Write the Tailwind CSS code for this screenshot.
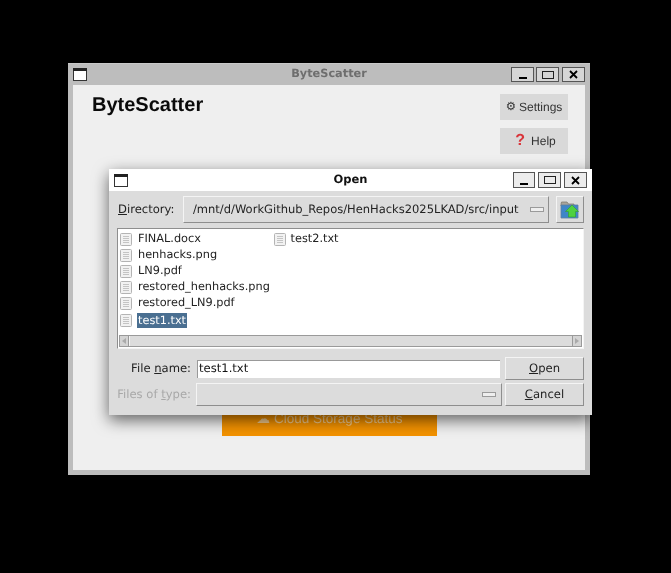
<!DOCTYPE html>
<html>
<head>
<meta charset="utf-8">
<script src="https://cdn.jsdelivr.net/npm/@tailwindcss/browser@4"></script>
</head>
<body class="bg-black">
<div class="relative w-[671px] h-[573px] overflow-hidden bg-black font-['DejaVu_Sans',sans-serif] text-[11.6px] text-[#222] blur-[0.35px] [text-rendering:geometricPrecision]">

  <!-- main window -->
  <div class="absolute left-[68px] top-[63px] w-[522px] h-[412px] bg-[#bdbdbd] flex flex-col border-t border-t-[#c8c8c8] px-[5px] pb-[5px]">
    <div class="h-[21px] -mx-[5px] shrink-0 flex items-center justify-between px-[5px] relative">
      <svg width="14" height="13" viewBox="0 0 14 13"><rect x="0.5" y="0.5" width="13" height="12" fill="#fff" stroke="#333"/><rect x="0" y="0" width="14" height="3" fill="#222"/></svg>
      <div class="absolute inset-x-0 top-0 h-full flex items-center justify-center font-bold text-[#6e6e6e] text-[11.3px]">ByteScatter</div>
      <div class="relative flex gap-[3px]">
        <div class="w-[23px] h-[15px] bg-[#d6d6d6] border border-[#555] flex items-end justify-center pb-[2px]"><div class="w-[8px] h-[2px] bg-black"></div></div>
        <div class="w-[23px] h-[15px] -ml-[1px] bg-[#d6d6d6] border border-[#555] flex items-center justify-center"><div class="w-[12px] h-[8px] border border-[#222]"></div></div>
        <div class="w-[23px] h-[15px] bg-[#d6d6d6] border border-[#555] flex items-center justify-center"><svg width="9" height="9" viewBox="0 0 9 9"><path d="M1 1 L8 8 M8 1 L1 8" stroke="#000" stroke-width="1.8"/></svg></div>
      </div>
    </div>
    <div class="flex-1 bg-[#efefef] relative flex justify-between pl-[19px] pr-[17px] pt-[6px]">
      <h1 class="mt-[1px] font-['Liberation_Sans',sans-serif] font-bold text-[20px] leading-[27px] text-[#0a0a0a]">ByteScatter</h1>
      <div class="flex flex-col gap-[8px] pt-[3px]">
        <div class="w-[68px] h-[26px] bg-[#d9d9d9] flex items-center justify-center font-['Liberation_Sans','DejaVu_Sans',sans-serif] text-[12px] text-[#333] gap-[3px]"><span class="font-['DejaVu_Sans'] text-[11.5px]">⚙</span><span>Settings</span></div>
        <div class="w-[68px] h-[26px] bg-[#d9d9d9] flex items-center justify-center font-['Liberation_Sans',sans-serif] text-[12px] text-[#333] gap-[6px] pl-[3px]"><span class="text-[#d9343a] font-bold text-[16px] leading-none">?</span><span>Help</span></div>
      </div>
      <div class="absolute left-[149px] bottom-[34px] w-[215px] h-[60px] bg-[#f39200] flex items-end justify-center pb-[7px] font-['Liberation_Sans','DejaVu_Sans',sans-serif] text-[13.5px] text-[#f0c98c] gap-[4px]"><span>☁</span><span>Cloud Storage Status</span></div>
    </div>
  </div>

  <!-- dialog -->
  <div class="absolute left-[109px] top-[169px] w-[483px] h-[246px] bg-[#dcdcdc] flex flex-col shadow-[0_5px_16px_rgba(0,0,0,0.6)] rounded-t-[2px]">
    <div class="relative h-[22px] shrink-0 bg-white flex items-center justify-between px-[5px]">
      <svg width="14" height="13" viewBox="0 0 14 13"><rect x="0.5" y="0.5" width="13" height="12" fill="#fff" stroke="#333"/><rect x="0" y="0" width="14" height="3" fill="#222"/></svg>
      <div class="absolute inset-x-0 top-0 h-full flex items-center justify-center font-bold text-[#111] text-[11.5px]">Open</div>
      <div class="relative flex gap-[3px]">
        <div class="w-[22px] h-[16px] bg-[#ececec] border border-[#555] flex items-end justify-center pb-[2px]"><div class="w-[8px] h-[2px] bg-black"></div></div>
        <div class="w-[23px] h-[16px] bg-[#ececec] border border-[#555] flex items-center justify-center"><div class="w-[12px] h-[8px] border border-[#222]"></div></div>
        <div class="w-[23px] h-[16px] bg-[#ececec] border border-[#555] flex items-center justify-center"><svg width="9" height="9" viewBox="0 0 9 9"><path d="M1 1 L8 8 M8 1 L1 8" stroke="#000" stroke-width="1.8"/></svg></div>
      </div>
    </div>
    <div class="flex-1 flex flex-col px-[8px] pt-[5px]">
      <!-- directory -->
      <div class="flex items-center h-[27px] shrink-0">
        <span class="w-[66px] pl-[1px] text-[#222] leading-none"><span class="underline">D</span>irectory:</span>
        <div class="w-[366px] h-[27px] bg-[#dcdcdc] border border-t-[#f4f4f4] border-l-[#f4f4f4] border-r-[#8e8e8e] border-b-[#8e8e8e] flex items-center pl-[9px] pr-[4px] justify-between">
          <span class="text-[11.5px] whitespace-nowrap">/mnt/d/WorkGithub_Repos/HenHacks2025LKAD/src/input</span>
          <div class="w-[14px] h-[5px] bg-[#eee] border border-[#9a9a9a]"></div>
        </div>
        <div class="ml-[7px] w-[28px] h-[27px] border border-t-[#f4f4f4] border-l-[#f4f4f4] border-r-[#8e8e8e] border-b-[#8e8e8e] flex items-center justify-center">
          <svg width="20" height="18" viewBox="0 0 20 18"><path d="M1 3 L1.5 1 H7 L8.5 3 H14 V5 H1 Z" fill="#a9a59a" stroke="#77746c" stroke-width="0.7"/><path d="M1 4 H18 V17 H1 Z" fill="#3f86c8" stroke="#5f7f9f" stroke-width="0.8"/><path d="M12 4 L18.5 10.5 H15.5 V16 H8.5 V10.5 H5.5 Z" fill="#4fd140" stroke="#2fa02c" stroke-width="0.6"/></svg>
        </div>
      </div>
      <!-- list -->
      <div class="mt-[5px] w-[467px] h-[121px] shrink-0 bg-white border border-t-[#8e8e8e] border-l-[#8e8e8e] border-r-[#f4f4f4] border-b-[#f4f4f4] flex flex-col text-[11.3px]">
        <div class="flex-1 flex pl-[2px] pt-[2px]">
          <div class="w-[153.5px] flex flex-col">
            <div class="h-[16.2px] flex items-center gap-[5px]"><svg class="shrink-0" width="12" height="13" viewBox="0 0 12 13"><rect x="0.5" y="0.5" width="11" height="12" rx="1" fill="#f2f2f2" stroke="#b4b4b4"/><path d="M3 3.5H9M3 5.5H9M3 7.5H9M3 9.5H9" stroke="#c4c4c4"/></svg><span class="pl-[1px]">FINAL.docx</span></div>
            <div class="h-[16.2px] flex items-center gap-[5px]"><svg class="shrink-0" width="12" height="13" viewBox="0 0 12 13"><rect x="0.5" y="0.5" width="11" height="12" rx="1" fill="#f2f2f2" stroke="#b4b4b4"/><path d="M3 3.5H9M3 5.5H9M3 7.5H9M3 9.5H9" stroke="#c4c4c4"/></svg><span class="pl-[1px]">henhacks.png</span></div>
            <div class="h-[16.2px] flex items-center gap-[5px]"><svg class="shrink-0" width="12" height="13" viewBox="0 0 12 13"><rect x="0.5" y="0.5" width="11" height="12" rx="1" fill="#f2f2f2" stroke="#b4b4b4"/><path d="M3 3.5H9M3 5.5H9M3 7.5H9M3 9.5H9" stroke="#c4c4c4"/></svg><span class="pl-[1px]">LN9.pdf</span></div>
            <div class="h-[16.2px] flex items-center gap-[5px]"><svg class="shrink-0" width="12" height="13" viewBox="0 0 12 13"><rect x="0.5" y="0.5" width="11" height="12" rx="1" fill="#f2f2f2" stroke="#b4b4b4"/><path d="M3 3.5H9M3 5.5H9M3 7.5H9M3 9.5H9" stroke="#c4c4c4"/></svg><span class="pl-[1px] whitespace-nowrap">restored_henhacks.png</span></div>
            <div class="h-[16.2px] flex items-center gap-[5px]"><svg class="shrink-0" width="12" height="13" viewBox="0 0 12 13"><rect x="0.5" y="0.5" width="11" height="12" rx="1" fill="#f2f2f2" stroke="#b4b4b4"/><path d="M3 3.5H9M3 5.5H9M3 7.5H9M3 9.5H9" stroke="#c4c4c4"/></svg><span class="pl-[1px] whitespace-nowrap">restored_LN9.pdf</span></div>
            <div class="h-[16.2px] flex items-center gap-[5px]"><svg class="shrink-0" width="12" height="13" viewBox="0 0 12 13"><rect x="0.5" y="0.5" width="11" height="12" rx="1" fill="#f2f2f2" stroke="#b4b4b4"/><path d="M3 3.5H9M3 5.5H9M3 7.5H9M3 9.5H9" stroke="#c4c4c4"/></svg><span class="px-[1px] h-[15px] leading-[15px] bg-[#4a6f91] text-white">test1.txt</span></div>
          </div>
          <div class="flex flex-col">
            <div class="h-[16.2px] flex items-center gap-[5px]"><svg class="shrink-0" width="12" height="13" viewBox="0 0 12 13"><rect x="0.5" y="0.5" width="11" height="12" rx="1" fill="#f2f2f2" stroke="#b4b4b4"/><path d="M3 3.5H9M3 5.5H9M3 7.5H9M3 9.5H9" stroke="#c4c4c4"/></svg><span>test2.txt</span></div>
          </div>
        </div>
        <!-- scrollbar -->
        <div class="h-[12px] mx-[1px] mb-[1px] shrink-0 bg-[#d4d4d4] border border-[#9a9a9a] flex">
          <div class="w-[9px] border-r border-[#9a9a9a] flex items-center justify-center"><div class="w-0 h-0 border-y-[3px] border-y-transparent border-r-[4px] border-r-[#aaa]"></div></div>
          <div class="flex-1 bg-[#dcdcdc] border-l border-[#f4f4f4]"></div>
          <div class="w-[9px] border-l border-[#9a9a9a] flex items-center justify-center"><div class="w-0 h-0 border-y-[3px] border-y-transparent border-l-[4px] border-l-[#aaa]"></div></div>
        </div>
      </div>
      <!-- file name -->
      <div class="mt-[8px] flex items-center h-[23px] shrink-0">
        <span class="w-[74px] text-right text-[#222]">File <span class="underline">n</span>ame:</span>
        <div class="ml-[6px] w-[303px] h-[18px] bg-white border-l border-t border-[#999] pl-[1px] leading-[15px] text-[#111]">test1.txt</div>
        <div class="ml-[5px] w-[79px] h-[23px] border border-t-[#f4f4f4] border-l-[#f4f4f4] border-r-[#8e8e8e] border-b-[#8e8e8e] flex items-center justify-center"><span><span class="underline">O</span>pen</span></div>
      </div>
      <!-- type -->
      <div class="mt-[3px] flex items-center h-[23px] shrink-0">
        <span class="w-[74px] text-right text-[#a8a8a8] whitespace-nowrap">Files of <span class="underline">t</span>ype:</span>
        <div class="ml-[5px] w-[306px] h-[23px] border border-t-[#f4f4f4] border-l-[#f4f4f4] border-r-[#8e8e8e] border-b-[#8e8e8e] flex items-center justify-end pr-[5px]"><div class="w-[14px] h-[5px] bg-[#eee] border border-[#9a9a9a]"></div></div>
        <div class="ml-[3px] w-[79px] h-[23px] border border-t-[#f4f4f4] border-l-[#f4f4f4] border-r-[#8e8e8e] border-b-[#8e8e8e] flex items-center justify-center"><span><span class="underline">C</span>ancel</span></div>
      </div>
    </div>
  </div>
</div>
</body>
</html>
